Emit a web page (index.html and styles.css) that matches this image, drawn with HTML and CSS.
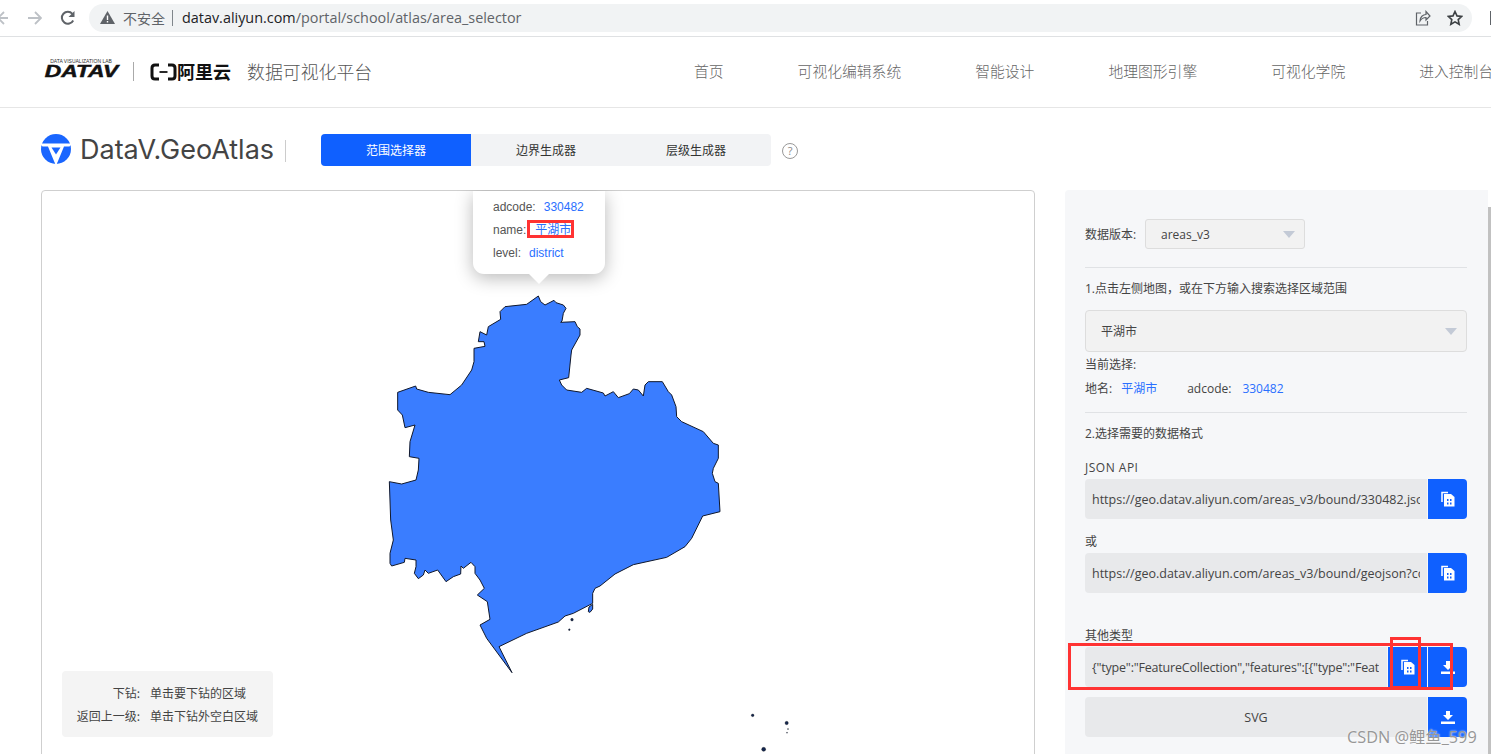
FILE: index.html
```html
<!DOCTYPE html>
<html lang="zh-CN">
<head>
<meta charset="utf-8">
<title>DataV.GeoAtlas</title>
<link rel="stylesheet" href="styles.css">
</head>
<body>
<div class="chrome">
  <svg class="cb-back" width="12" height="14" viewBox="0 0 12 14"><path d="M11 7H1M7 1L1 7l6 6" fill="none" stroke="#bdc1c6" stroke-width="1.8"/></svg>
  <svg class="cb-fwd" width="15" height="14" viewBox="0 0 15 14"><path d="M1 7h12M8 1l6 6-6 6" fill="none" stroke="#bdc1c6" stroke-width="1.8"/></svg>
  <svg class="cb-reload" width="16" height="16" viewBox="0 0 16 16"><path d="M13.2 10.5A6 6 0 1 1 12.4 3.8" fill="none" stroke="#5f6368" stroke-width="2"/><path d="M14.5 1v6h-6z" fill="#5f6368"/></svg>
  <div class="omni">
    <svg class="warn" width="15" height="13" viewBox="0 0 15 13"><path d="M7.5 0L15 13H0z" fill="#5f6368"/><path d="M6.8 4.5h1.4v4.5H6.8zM6.8 10h1.4v1.4H6.8z" fill="#fff"/></svg>
    <span class="insecure">不安全</span>
    <span class="omni-div"></span>
    <span class="url"><span class="host">datav.aliyun.com</span>/portal/school/atlas/area_selector</span>
    <svg class="share" width="16" height="16" viewBox="0 0 16 16"><path d="M6 3H1.5v12h11v-4M5 11c0-4 3-6.500 6-6.500V1.500l4 4.500-4 4V7.500C8.500 7.500 6.500 8.500 5 11z" fill="none" stroke="#5f6368" stroke-width="1.200"/></svg>
    <svg class="star" width="16" height="16" viewBox="0 0 16 16"><path d="M8 1.500l2 4.400 4.700.5-3.500 3.200 1 4.700L8 11.900l-4.200 2.400 1-4.700L1.300 6.400 6 5.900z" fill="none" stroke="#3c4043" stroke-width="1.600"/></svg>
  </div>
  <span class="ext-box"></span>
</div>

<header class="site-head">
  <div class="brand">
    <div class="datav-logo">
      <span class="datav-lab">DATA VISUALIZATION LAB</span>
      <span class="datav-word">DATAV</span>
    </div>
    <span class="brand-sep"></span>
    <svg class="ali-mark" width="27" height="18" viewBox="0 0 27 18"><path d="M9 2H5Q2 2 2 5v8q0 3 3 3h4M18 2h4q3 0 3 3v8q0 3-3 3h-4" fill="none" stroke="#111" stroke-width="3"/><path d="M9.500 9h8" stroke="#111" stroke-width="1.800"/></svg>
    <span class="ali-word">阿里云</span>
    <span class="brand-title">数据可视化平台</span>
  </div>
  <nav class="nav">
    <a class="nav-item">首页</a>
    <a class="nav-item">可视化编辑系统</a>
    <a class="nav-item">智能设计</a>
    <a class="nav-item">地理图形引擎</a>
    <a class="nav-item">可视化学院</a>
    <a class="nav-item">进入控制台</a>
  </nav>
</header>

<section class="title-row">
  <svg class="geo-logo" width="30" height="30" viewBox="0 0 30 30"><circle cx="15" cy="15" r="15" fill="#1a66ff"/><path d="M-1 9.500H31L15 31z" fill="#fff"/><path d="M10.500 13.500h9L15 20.500z" fill="#1a66ff"/><path d="M1 12.500Q1 22 8 27L14 29.500 7 12.500zM29 12.500Q29 22 22 27L16 29.500 23 12.500z" fill="#1a66ff"/></svg>
  <span class="geo-name">DataV.GeoAtlas</span>
  <span class="geo-sep"></span>
  <div class="tabs">
    <span class="tab tab-active">范围选择器</span>
    <span class="tab">边界生成器</span>
    <span class="tab">层级生成器</span>
  </div>
  <span class="help">?</span>
</section>

<main class="main">
  <section class="map">
    <svg class="map-svg" width="450" height="563" viewBox="0 18 1350 1689">
      <path class="region" d="M505 333L512 350 525 360 552 346 558 353 580 360 588 370 580 385 576 408 572 412 615 410 622 425 630 432 630 450 605 495 603 510 596 578 568 585 575 600 590 615 635 622 650 610 700 624 705 633 730 620 745 638 778 626 790 612 805 615 820 633 825 600 835 590 877 590 895 620 905 630 918 665 920 695 935 710 1000 740 1030 775 1045 780 1045 820 1030 850 1027 865 1035 890 1045 895 1050 980 998 993 965 1060 945 1085 890 1117 790 1139 735 1167 690 1203 675 1210 668 1225 668 1255 610 1285 585 1293 565 1311 470 1345 387 1385 426 1463 350 1360 330 1320 360 1303 352 1250 322 1230 343 1210 330 1185 315 1165 315 1145 303 1132 280 1150 273 1143 272 1167 250 1175 228 1190 203 1155 175 1165 165 1155 160 1170 145 1181 133 1165 138 1145 138 1125 105 1120 103 1132 65 1143 60 1135 60 1105 70 1065 62 1005 58 890 95 897 138 885 145 855 147 820 118 815 120 770 135 720 105 728 97 690 83 675 83 622 137 603 140 612 175 622 240 629 275 600 305 555 312 530 312 490 345 484 342 470 325 470 330 440 350 450 355 425 392 403 390 380 405 365 470 358Z"/>
      <path class="region" d="M668 1258L668 1272 660 1282 655 1280 657 1266Z"/>
      <circle class="isle" cx="606" cy="1304" r="4"/>
      <circle class="isle" cx="598" cy="1334" r="2.500"/>
      <circle class="isle" cx="1148" cy="1591" r="4"/>
      <circle class="isle" cx="1250" cy="1614" r="5"/>
      <circle class="isle" cx="1254" cy="1632" r="1.500"/>
      <circle class="isle" cx="1251" cy="1643" r="1.500"/>
      <circle class="isle" cx="1181" cy="1693" r="6"/>
    </svg>
    <div class="tip">
      <div class="tip-row"><span class="tip-key">adcode:</span><span class="tip-val">330482</span></div>
      <div class="tip-row"><span class="tip-key">name:</span><span class="tip-val tip-name">平湖市</span></div>
      <div class="tip-row"><span class="tip-key">level:</span><span class="tip-val">district</span></div>
      <i class="tip-arrow"></i>
    </div>
    <div class="hint">
      <div class="hint-row"><span class="hint-key">下钻:</span><span>单击要下钻的区域</span></div>
      <div class="hint-row"><span class="hint-key">返回上一级:</span><span>单击下钻外空白区域</span></div>
    </div>
  </section>

  <aside class="panel">
    <div class="version-row">
      <span class="version-label">数据版本:</span>
      <div class="select select-small"><span>areas_v3</span><svg class="chev" width="12" height="7" viewBox="0 0 12 7"><path d="M0 0h12L6 7z" fill="#c3cad6"/></svg></div>
    </div>
    <hr class="rule rule-a">
    <p class="line line-1">1.点击左侧地图&#xFF0C;或在下方输入搜索选择区域范围</p>
    <div class="select select-big"><span>平湖市</span><svg class="chev" width="12" height="7" viewBox="0 0 12 7"><path d="M0 0h12L6 7z" fill="#c3cad6"/></svg></div>
    <p class="line line-cur">当前选择:</p>
    <p class="line line-place">地名:<a class="link link-name">平湖市</a><span class="ad-key">adcode:</span><a class="link">330482</a></p>
    <hr class="rule rule-b">
    <p class="line line-2">2.选择需要的数据格式</p>
    <p class="line line-api">JSON API</p>
    <div class="field"><div class="input"><span class="input-text">https://geo.datav.aliyun.com/areas_v3/bound/330482.json</span></div><button class="icon-btn btn-end"><svg class="i-copy" width="14" height="16" viewBox="0 0 14 16"><use href="#copy"/></svg></button></div>
    <p class="line line-or">或</p>
    <div class="field"><div class="input"><span class="input-text">https://geo.datav.aliyun.com/areas_v3/bound/geojson?code=330482</span></div><button class="icon-btn btn-end"><svg class="i-copy" width="14" height="16" viewBox="0 0 14 16"><use href="#copy"/></svg></button></div>
    <p class="line line-other">其他类型</p>
    <div class="field"><div class="input input-short"><span class="input-text">{"type":"FeatureCollection","features":[{"type":"Feature","properties":{}}]}</span></div><button class="icon-btn"><svg class="i-copy" width="14" height="16" viewBox="0 0 14 16"><use href="#copy"/></svg></button><button class="icon-btn btn-end"><svg width="14" height="14" viewBox="0 0 14 14"><use href="#down"/></svg></button></div>
    <div class="field field-svg"><div class="input input-center">SVG</div><button class="icon-btn btn-end"><svg width="14" height="14" viewBox="0 0 14 14"><use href="#down"/></svg></button></div>
  </aside>
</main>

<i class="scrollbar"></i>
<i class="mark mark-name"></i>
<i class="mark mark-row"></i>
<i class="mark mark-copy"></i>
<span class="watermark">CSDN @鲤鱼_599</span>

<svg class="defs" width="0" height="0">
  <defs>
    <g id="copy">
      <path d="M1 11V1.500h6" fill="none" stroke="#fff" stroke-width="1.500"/>
      <path d="M3 3h7l3.500 3v9.500H3z" fill="#fff"/>
      <path d="M6 8h1.500v2H6zM9 8h1.500v2H9zM6 11.500h1.500v2H6zM9 11.500h1.500v2H9z" fill="#0f60ff"/>
    </g>
    <g id="down">
      <path d="M5 1h4v4h3L7 10 2 5h3zM0 11.500h14V14H0z" fill="#fff"/>
    </g>
  </defs>
</svg>
</body>
</html>
```
FILE: styles.css
```css
* { box-sizing: border-box; }
html, body { margin: 0; height: 754px; overflow: hidden; background: #fff; }
body {
  position: relative;
  font-family: "Open Sans", "Noto Sans CJK SC", sans-serif;
  font-size: 12px;
  color: #444;
}
p { margin: 0; }

/* browser chrome */
.chrome {
  height: 37px;
  display: flex;
  align-items: center;
  border-bottom: 1px solid #dfe1e3;
  padding-bottom: 1px;
  overflow: hidden;
}
.cb-back { margin-left: -3px; flex: none; }
.cb-fwd { margin-left: 18px; flex: none; }
.cb-reload { margin-left: 18px; flex: none; }
.omni {
  margin-left: 13px;
  width: 1383px;
  flex: none;
  height: 28px;
  border-radius: 14px;
  background: #f1f3f4;
  display: flex;
  align-items: center;
  padding-left: 11px;
}
.insecure { margin-left: 8px; font-size: 14px; color: #5f6368; font-family: "Noto Sans CJK SC", sans-serif; }
.omni-div { width: 1px; height: 16px; background: #80868b; margin: 0 9px 0 7px; }
.url { font-size: 14.400px; color: #5f6368; white-space: nowrap; }
.host { color: #202124; }
.share { margin-left: auto; }
.star { margin-left: 16px; margin-right: 9px; }
.ext-box { width: 8px; height: 14px; border: 2px solid #5f6368; margin-left: 18px; flex: none; }

/* site header */
.site-head {
  height: 71px;
  border-bottom: 1px solid #e6e6e6;
  padding-bottom: 2px;
  display: flex;
  align-items: center;
  white-space: nowrap;
}
.brand { width: 694px; padding-left: 43px; display: flex; align-items: center; flex: none; }
.datav-logo { width: 76px; display: flex; flex-direction: column; align-items: center; margin-top: -5px; }
.datav-lab { font: 5px/6px "Liberation Sans", sans-serif; color: #333; }
.datav-word {
  font: italic 700 17px/15px "Liberation Sans", sans-serif;
  color: #111;
  -webkit-text-stroke: .5px #111;
  transform: scaleX(1.340);
}
.brand-sep { width: 1px; height: 19px; background: #aaa; margin-left: 14px; }
.ali-mark { margin-left: 16px; margin-top: 1px; }
.ali-word { margin-left: 0; font: 700 18px/1 "Noto Sans CJK SC", sans-serif; color: #111; width: 54px; }
.brand-title { margin-left: 16px; margin-top: 2px; font: 300 17.900px/1 "Noto Sans CJK SC", sans-serif; color: #555; }
.nav { display: flex; gap: 74px; }
.nav-item { font: 300 14.800px/1 "Noto Sans CJK SC", sans-serif; color: #666; flex: none; }

/* title row */
.title-row {
  height: 82px;
  padding: 26px 0 0 41px;
  display: flex;
  align-items: flex-start;
}
.geo-logo { flex: none; }
.geo-name { margin-left: 9px; font: 400 27px/32px "Inter", sans-serif; color: #444; width: 195px; white-space: nowrap; }
.geo-sep { width: 1px; height: 22px; background: #ccc; margin: 6px 0 0 10px; }
.tabs { display: flex; margin-left: 35px; border-radius: 4px; overflow: hidden; background: #f2f3f5; }
.tab { width: 150px; height: 32px; line-height: 32px; text-align: center; font-family: "Noto Sans CJK SC", sans-serif; color: #333; }
.tab-active { background: #0f60ff; color: #fff; }
.help {
  width: 16px; height: 16px; margin: 9px 0 0 11px;
  border: 1px solid #999; border-radius: 50%;
  color: #888; font-size: 11px; line-height: 14px; text-align: center;
}

/* main */
.main { display: flex; gap: 30px; padding-left: 41px; height: 564px; overflow: hidden; }
.map {
  position: relative;
  width: 994px;
  height: 620px;
  flex: none;
  border: 1px solid #cfcfcf;
  border-radius: 4px;
}
.map-svg { position: absolute; left: 328px; top: 0; }
.region { fill: #3a7dff; stroke: #10182c; stroke-width: 3; stroke-linejoin: round; }
.isle { fill: #14264f; stroke: #111; stroke-width: 1; }
.tip {
  position: absolute;
  left: 431px;
  top: 0;
  width: 132px;
  height: 83px;
  background: #fff;
  border-radius: 0 0 11px 11px;
  box-shadow: 0 4px 18px rgba(0,0,0,.28);
  padding: 5px 0 0 20px;
}
.tip-row { height: 23px; line-height: 23px; white-space: nowrap; display: flex; font-family: "Liberation Sans", "Noto Sans CJK SC", sans-serif; color: #555; }
.tip-val { color: #2a6fff; margin-left: 8px; }
.tip-name { margin-left: 9px; }
.tip-arrow {
  position: absolute;
  left: 55px;
  bottom: -10px;
  width: 0; height: 0;
  border-left: 11px solid transparent;
  border-right: 11px solid transparent;
  border-top: 11px solid #fff;
}
.hint {
  position: absolute;
  left: 20px;
  top: 480px;
  width: 211px;
  height: 66px;
  background: #f4f4f4;
  border-radius: 4px;
  padding: 10px 0 0 0;
  font-family: "Noto Sans CJK SC", sans-serif;
  color: #444;
}
.hint-row { display: flex; height: 23px; line-height: 23px; }
.hint-key { width: 88px; text-align: right; padding-right: 10px; flex: none; }

/* panel */
.panel {
  width: 423px;
  height: 620px;
  flex: none;
  background: #f6f7f9;
  border-radius: 4px 0 0 0;
  padding: 29px 21px 0 20px;
  font-family: "Open Sans", "Noto Sans CJK SC", sans-serif;
}
.version-row { display: flex; align-items: center; }
.version-label { width: 60px; flex: none; }
.select {
  display: flex;
  align-items: center;
  justify-content: space-between;
  background: #f2f2f2;
  border: 1px solid #ddd;
  border-radius: 3px;
  padding: 0 9px 0 15px;
}
.select-small { width: 160px; height: 30px; }
.select-big { height: 42px; margin-top: 12px; border-radius: 4px; }
.rule { border: 0; border-top: 1px solid #e0e2e5; margin: 0; }
.rule-a { margin-top: 18px; }
.rule-b { margin-top: 14px; }
.line { height: 20px; line-height: 22px; white-space: nowrap; }
.line-1 { margin-top: 10px; }
.line-cur { margin-top: 2px; }
.line-place { margin-top: 4px; }
.link { color: #2a6fff; }
.link-name { margin-left: 9px; }
.ad-key { margin-left: 30px; margin-right: 11px; }
.line-2 { margin-top: 10px; }
.line-api { margin-top: 14px; letter-spacing: .5px; }
.line-or { margin-top: 12px; }
.line-other { margin-top: 32px; }
.field { display: flex; gap: 1px; height: 40px; margin-top: 2px; }
.field-svg { margin-top: 10px; }
.input {
  flex: 1;
  min-width: 0;
  background: #e8e9eb;
  border-radius: 4px 0 0 4px;
  padding: 0 7px;
  display: flex;
  align-items: center;
  color: #444;
  font-size: 12.500px;
}
.input-text { display: block; white-space: nowrap; overflow: hidden; width: 100%; }
.input-center { justify-content: center; }
.input-short { padding-right: 8px; letter-spacing: -.2px; }
.icon-btn {
  width: 39px;
  flex: none;
  padding: 0;
  border: 0;
  background: #0f60ff;
  display: flex;
  align-items: center;
  justify-content: center;
}
.btn-end { border-radius: 0 4px 4px 0; }

/* overlays */
.scrollbar { position: absolute; left: 1488px; top: 207px; width: 3px; height: 547px; background: #c1c1c1; }
.mark { position: absolute; border: 3px solid #f33; }
.mark-name { left: 527px; top: 220px; width: 47px; height: 18px; }
.mark-row { left: 1068px; top: 643px; width: 385px; height: 47px; }
.mark-copy { left: 1390px; top: 637px; width: 31px; height: 52px; }
.watermark {
  position: absolute;
  left: 1347px;
  top: 727px;
  font: 16.300px/20px "Open Sans", "Noto Sans CJK SC", sans-serif;
  color: #979797;
  text-shadow: 0 0 2px #fff;
  white-space: nowrap;
}
.defs { position: absolute; }
```
